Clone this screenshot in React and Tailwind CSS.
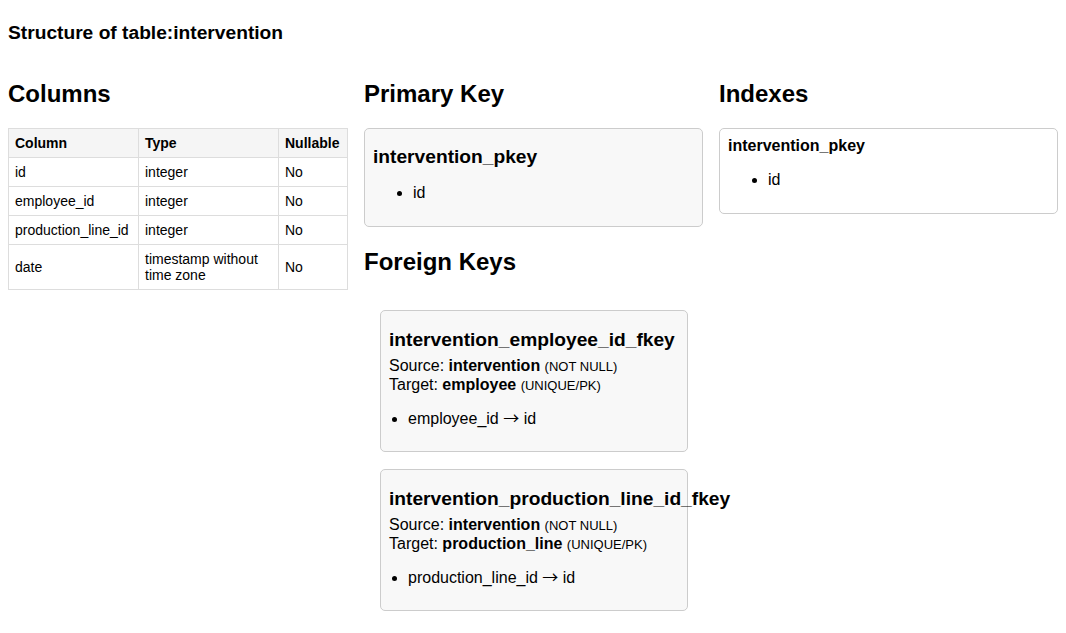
const columns = [
  { name: 'id', type: 'integer', nullable: 'No' },
  { name: 'employee_id', type: 'integer', nullable: 'No' },
  { name: 'production_line_id', type: 'integer', nullable: 'No' },
  { name: 'date', type: 'timestamp without time zone', nullable: 'No' },
];

const foreignKeys = [
  {
    name: 'intervention_employee_id_fkey',
    source: 'intervention',
    target: 'employee',
    from: 'employee_id',
    to: 'id',
  },
  {
    name: 'intervention_production_line_id_fkey',
    source: 'intervention',
    target: 'production_line',
    from: 'production_line_id',
    to: 'id',
  },
];

function SectionTitle({ children }) {
  return <h2 className="text-[24px] font-bold leading-7 text-black">{children}</h2>;
}

function ColumnsTable() {
  return (
    <table className="mt-5 w-[340px] table-fixed border-collapse text-[14px] leading-4">
      <colgroup>
        <col className="w-[130px]" />
        <col className="w-[140px]" />
        <col />
      </colgroup>
      <thead>
        <tr className="bg-[#f5f5f5]">
          <th className="border border-[#dddddd] px-1.5 py-1.5 text-left font-bold">Column</th>
          <th className="border border-[#dddddd] px-1.5 py-1.5 text-left font-bold">Type</th>
          <th className="border border-[#dddddd] px-1.5 py-1.5 text-left font-bold">Nullable</th>
        </tr>
      </thead>
      <tbody>
        {columns.map((c) => (
          <tr key={c.name}>
            <td className="border border-[#dddddd] px-1.5 py-1.5 align-middle">{c.name}</td>
            <td className="border border-[#dddddd] px-1.5 py-1.5 align-middle">{c.type}</td>
            <td className="border border-[#dddddd] px-1.5 py-1.5 align-middle">{c.nullable}</td>
          </tr>
        ))}
      </tbody>
    </table>
  );
}

function ForeignKeyCard({ fk }) {
  return (
    <div className="ml-4 h-[142px] w-[308px] rounded-[5px] border border-[#cccccc] bg-[#f8f8f8] px-2 pt-[18px]">
      <h3 className="whitespace-nowrap text-[19.2px] font-bold leading-[22px]">{fk.name}</h3>
      <p className="mt-1.5 text-[16px] leading-[18px]">
        Source: <strong>{fk.source}</strong> <span className="text-[13px]">(NOT NULL)</span>
      </p>
      <p className="text-[16px] leading-[18px]">
        Target: <strong>{fk.target}</strong> <span className="text-[13px]">(UNIQUE/PK)</span>
      </p>
      <ul className="mt-[15px] list-disc pl-[19px] text-[16px] leading-[18px]">
        <li>
          {fk.from}{' '}
          <span className="inline-block h-[18px] -translate-y-[2px] align-top font-['Noto_Sans_CJK_SC',sans-serif] leading-[18px]">
            →
          </span>{' '}
          {fk.to}
        </li>
      </ul>
    </div>
  );
}

export default function App() {
  return (
    <div className="min-h-screen bg-white px-2 font-['Liberation_Sans',Arial,sans-serif] text-black">
      <h3 className="pt-[22px] text-[19.2px] font-bold leading-[22px]">Structure of table:intervention</h3>

      <div className="mt-[36px] grid grid-cols-[340px_339px_339px] gap-4">
        <section>
          <SectionTitle>Columns</SectionTitle>
          <ColumnsTable />
        </section>

        <section>
          <SectionTitle>Primary Key</SectionTitle>
          <div className="mt-5 h-[99px] rounded-[5px] border border-[#cccccc] bg-[#f8f8f8] px-2 pt-[17px]">
            <h3 className="text-[19.2px] font-bold leading-[22px]">intervention_pkey</h3>
            <ul className="mt-4 list-disc pl-10 text-[16px] leading-[18px]">
              <li>id</li>
            </ul>
          </div>

          <div className="mt-[21px]">
            <SectionTitle>Foreign Keys</SectionTitle>
          </div>
          <div className="mt-[34px] flex flex-col gap-[17px]">
            {foreignKeys.map((fk) => (
              <ForeignKeyCard key={fk.name} fk={fk} />
            ))}
          </div>
        </section>

        <section>
          <SectionTitle>Indexes</SectionTitle>
          <div className="mt-5 h-[86px] rounded-[5px] border border-[#cccccc] bg-white px-2 pt-[8px]">
            <h4 className="text-[16px] font-bold leading-[18px]">intervention_pkey</h4>
            <ul className="mt-4 list-disc pl-10 text-[16px] leading-[18px]">
              <li>id</li>
            </ul>
          </div>
        </section>
      </div>
    </div>
  );
}
